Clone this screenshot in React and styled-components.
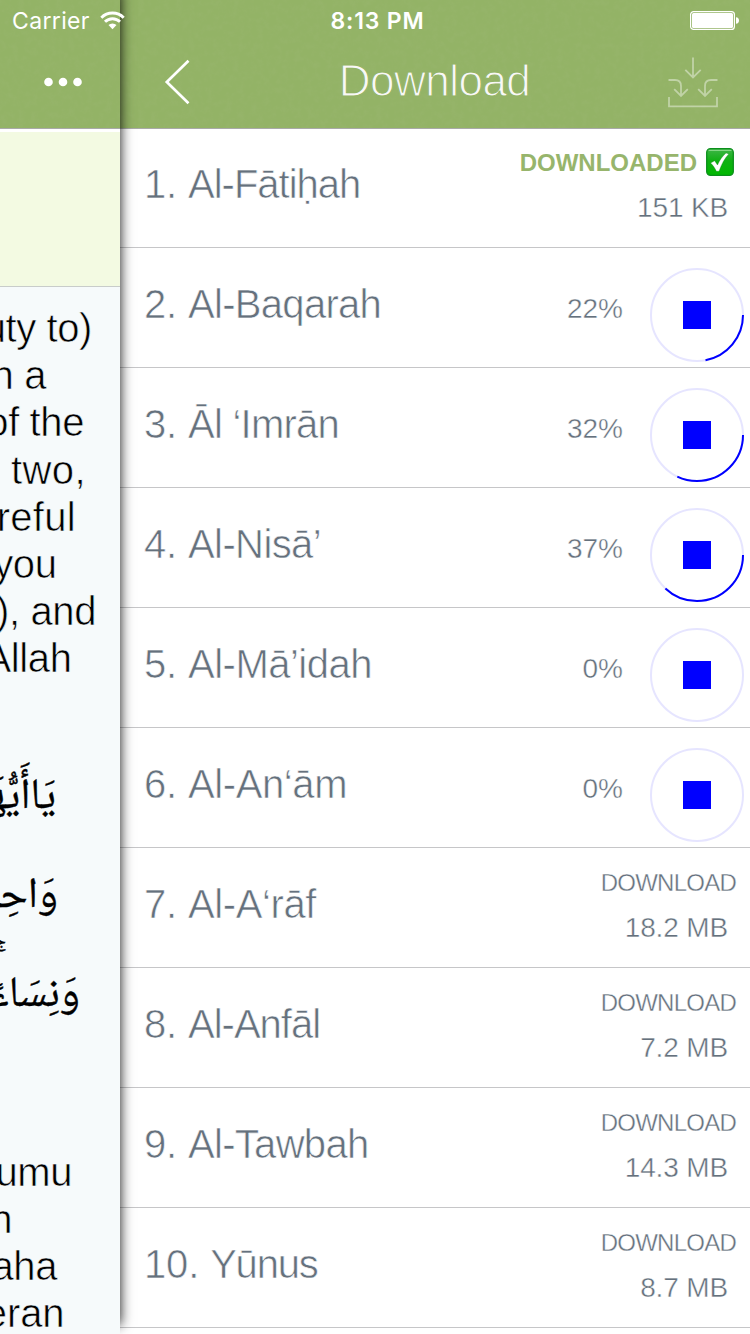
import React from 'react';
import styled, { createGlobalStyle } from 'styled-components';

const SANS = '"Liberation Sans", Arial, sans-serif';
const SLATE = '#65717d';

const GlobalStyle = createGlobalStyle`
  *, *::before, *::after { box-sizing: border-box; }
  body { margin: 0; background: #fff; font-family: ${SANS}; }
`;

const Screen = styled.div`
  position: relative;
  display: flex;
  width: 750px;
  height: 1334px;
  overflow: hidden;
  background: #fff;
`;

/* Status bar floats over both panes */
const StatusBar = styled.div`
  position: absolute;
  inset: 0 0 auto 0;
  z-index: 3;
  display: grid;
  grid-template-columns: 1fr auto 1fr;
  align-items: center;
  height: 41px;
  padding: 0 11px 0 12px;
  color: #fff;
  font-family: Inter, sans-serif;
  font-size: 23px;
`;
const Carrier = styled.div`
  display: flex;
  align-items: center;
  gap: 10px;
  letter-spacing: 0.35px;
`;
const Clock = styled.div`
  padding-left: 4px;
  font-weight: 600;
  letter-spacing: 0.8px;
`;
const Battery = styled.svg`
  justify-self: end;
`;

const ReaderPane = styled.aside`
  position: relative;
  z-index: 2;
  flex: 0 0 120px;
  min-width: 0;
  display: flex;
  flex-direction: column;
  height: 1334px;
  background: #f6fafb;
  box-shadow: 0 -9px 12px 0 rgba(0, 0, 0, 0.95);
`;
const DownloadPane = styled.main`
  flex: 1;
  display: flex;
  flex-direction: column;
`;

const HeaderBar = styled.header`
  position: relative;
  flex: 0 0 129px;
  display: grid;
  grid-template-columns: ${(p) => p.$columns};
  align-items: center;
  padding: 41px 32px 5px 44px;
  background: #93b366;
  border-bottom: 1px solid #a9aaa8;
  overflow: hidden;
`;
const Texture = styled.svg`
  position: absolute;
  inset: 0;
  width: 100%;
  height: 100%;
  opacity: 0.2;
`;
const HeaderIcon = styled.svg`
  position: relative;
  display: block;
`;
const Title = styled.h1`
  position: relative;
  margin: 0 13px 3px 0;
  text-align: center;
  font-size: 44px;
  font-weight: 400;
  line-height: 50px;
  letter-spacing: -0.5px;
  color: #f8f8f6;
  -webkit-text-stroke: 1.1px #93b366;
`;

const VerseBanner = styled.div`
  flex: 0 0 158px;
  border-top: 3px solid #fff;
  border-bottom: 1px solid #c8ccca;
  background: #f3fae2;
`;
const Paragraph = styled.div`
  display: flex;
  flex-direction: column;
  align-items: flex-end;
  padding-top: ${(p) => p.$top}px;
  font-size: 40px;
  line-height: 47.2px;
  letter-spacing: -0.4px;
  color: #000;
  -webkit-text-stroke: 0.6px #f6fafb;
`;
const Line = styled.span`
  flex: none;
  margin-right: ${(p) => p.$inset}px;
  letter-spacing: ${(p) => p.$tracking}px;
  white-space: pre;
`;
const ArabicBlock = styled.div`
  display: flex;
  flex-direction: column;
  align-items: flex-start;
  direction: rtl;
  padding-top: 66px;
  font-family: "Noto Naskh Arabic", Amiri, "Scheherazade New", "Noto Sans Arabic", serif;
  font-size: 43px;
  line-height: 99px;
  color: #000;
  -webkit-text-stroke: 0.4px #000;
`;
const ArabicLine = styled.span`
  height: 99px;
  margin-right: ${(p) => p.$inset}px;
  white-space: nowrap;
`;
/* Pause sign raised above the end of the word */
const PauseMark = styled.span`
  position: relative;
  left: 16px;
  top: -36px;
`;

const List = styled.ul`
  margin: -1px 0 0;
  padding: 0;
  list-style: none;
`;
const Row = styled.li`
  display: flex;
  height: 120px;
  padding-left: 24px;
  border-bottom: 1px solid #c6c6c8;
  color: ${SLATE};
`;
const Name = styled.div`
  flex: 1;
  padding-bottom: 7px;
  font-size: 40px;
  line-height: 113px;
  letter-spacing: -0.15px;
  white-space: pre;
  -webkit-text-stroke: 0.6px #fff;
`;
const Label = styled.span`
  letter-spacing: ${(p) => p.$tracking}px;
`;
const Status = styled.div`
  display: flex;
  flex-direction: column;
  align-items: flex-end;
  gap: 13px;
  padding: 20px 14px 0 0;
`;
const Action = styled.div`
  display: flex;
  align-items: center;
  gap: 9px;
  height: 30px;
  font-size: 24px;
  line-height: 30px;
  letter-spacing: -0.75px;
  -webkit-text-stroke: 0.35px #fff;
`;
const Done = styled(Action)`
  padding-right: 2px;
  font-weight: 700;
  letter-spacing: 0;
  color: #97b56c;
  -webkit-text-stroke: 0;
`;
const Size = styled.div`
  padding-right: 8px;
  font-size: 28px;
  line-height: 34px;
  letter-spacing: -0.15px;
  -webkit-text-stroke: 0.4px #fff;
`;
const Progress = styled.div`
  display: flex;
  align-items: center;
  gap: 27px;
  padding-right: 6px;
`;
const Percent = styled.span`
  padding-top: 2px;
  font-size: 28px;
  -webkit-text-stroke: 0.4px #fff;
`;
const Ring = styled.svg`
  margin-top: 15px;
`;
const Badge = styled.svg`
  margin-bottom: 2px;
`;

const SURAHS = [
  { no: 1, name: 'Al-Fātiḥah', tracking: -1, size: '151 KB', done: true },
  { no: 2, name: 'Al-Baqarah', tracking: -0.7, progress: 22 },
  { no: 3, name: 'Āl ‘Imrān', tracking: -0.75, progress: 32 },
  { no: 4, name: 'Al-Nisā’', tracking: -0.6, progress: 37 },
  { no: 5, name: 'Al-Mā’idah', tracking: -0.5, progress: 0 },
  { no: 6, name: 'Al-An‘ām', tracking: -0.4, progress: 0 },
  { no: 7, name: 'Al-A‘rāf', tracking: -0.4, size: '18.2 MB' },
  { no: 8, name: 'Al-Anfāl', tracking: -1, size: '7.2 MB' },
  { no: 9, name: 'Al-Tawbah', tracking: -0.7, size: '14.3 MB' },
  { no: 10, name: 'Yūnus', tracking: -1.2, size: '8.7 MB' },
];

const ENGLISH = [
  { text: 'uty to)', inset: 28 },
  { text: 'n a', inset: 74 },
  { text: 'of the', inset: 36 },
  { text: ' two,', inset: 34, tracking: 0.4 },
  { text: 'areful', inset: 44, tracking: 0.3 },
  { text: 'you', inset: 63.5 },
  { text: '), and', inset: 24 },
  { text: 'Allah', inset: 48.5 },
];
const SECOND = [
  { text: 'umu', inset: 48 },
  { text: 'n', inset: 108 },
  { text: 'aha', inset: 63 },
  { text: 'eran', inset: 55.5, tracking: -0.1 },
];
const ARABIC = [
  { text: 'يَاأَيُّهَا', inset: 64 },
  { text: 'وَاحِدَةٍ', inset: 62 },
  { text: 'وَنِسَاءً', inset: 40, mark: ' ۚ' },
];

function Header({ columns, children }) {
  const id = React.useId();
  return (
    <HeaderBar $columns={columns}>
      <Texture aria-hidden="true">
        <filter id={id} x="0" y="0" width="100%" height="100%">
          <feTurbulence type="fractalNoise" baseFrequency="0.16" numOctaves="3" seed="4" />
          <feColorMatrix values="0 0 0 0 0.38  0 0 0 0 0.5  0 0 0 0 0.22  1.6 0 0 0 -0.6" />
        </filter>
        <rect width="100%" height="100%" filter={`url(#${id})`} />
      </Texture>
      {children}
    </HeaderBar>
  );
}

function Lines({ top, lines }) {
  return (
    <Paragraph $top={top}>
      {lines.map(({ text, inset, tracking = -0.4 }) => (
        <Line key={text} $inset={inset} $tracking={tracking}>{text}</Line>
      ))}
    </Paragraph>
  );
}

function ProgressRing({ value }) {
  const c = 2 * Math.PI * 46;
  return (
    <Ring width="94" height="94" viewBox="0 0 94 94" fill="none" strokeWidth="2">
      <circle cx="47" cy="47" r="46" stroke="#e6e5ff" />
      {value > 0 && (
        <circle cx="47" cy="47" r="46" stroke="#0000ff" strokeDasharray={`${(c * value) / 100} ${c}`} />
      )}
      <rect x="33" y="33" width="28" height="28" fill="#0000ff" />
    </Ring>
  );
}

function CheckBadge() {
  return (
    <Badge width="28" height="28" viewBox="0 0 28 28">
      <defs>
        <linearGradient id="badge" x1="0" y1="0" x2="0" y2="1">
          <stop offset="0" stopColor="#3fb548" />
          <stop offset="0.45" stopColor="#10b013" />
          <stop offset="1" stopColor="#00b800" />
        </linearGradient>
      </defs>
      <rect x="0.7" y="0.7" width="26.6" height="26.6" rx="3.8" fill="url(#badge)" stroke="#0c8f1c" strokeWidth="1.3" />
      <path d="M3 2.4h22" stroke="#8ddc8c" strokeWidth="1" strokeLinecap="round" />
      <path d="M4.600 15l4-2.200 2.900 4.200C13.700 12 16.600 8 20 5l2.800.9C18.600 10.400 15.600 15.800 13 23.300h-2.600C9 20.300 7 17.200 4.600 15z" fill="#fff" stroke="#077d12" strokeWidth="0.3" />
    </Badge>
  );
}

function SurahRow({ no, name, tracking, size, done, progress }) {
  return (
    <Row>
      <Name>{`${no}. `}<Label $tracking={tracking}>{name}</Label></Name>
      {progress !== undefined ? (
        <Progress>
          <Percent>{progress}%</Percent>
          <ProgressRing value={progress} />
        </Progress>
      ) : (
        <Status>
          {done ? <Done>DOWNLOADED <CheckBadge /></Done> : <Action>DOWNLOAD</Action>}
          <Size>{size}</Size>
        </Status>
      )}
    </Row>
  );
}

export default function App() {
  return (
    <>
      <GlobalStyle />
      <Screen>
        <StatusBar>
          <Carrier>
            Carrier
            <svg width="25" height="19" viewBox="0 0 25 19" fill="none" stroke="#fff" strokeWidth="2.9">
              <path d="M1.3 6.7a15.8 15.8 0 0 1 22.4 0" />
              <path d="M5 10.8a10.6 10.6 0 0 1 15 0" />
              <path d="M12.5 18.3l-4-4.2a5.7 5.7 0 0 1 8 0z" fill="#fff" stroke="none" />
            </svg>
          </Carrier>
          <Clock>8:13 PM</Clock>
          <Battery width="49" height="19" viewBox="0 0 49 19">
            <rect x="0.6" y="0.6" width="43.8" height="17.8" rx="3" fill="none" stroke="#fff" strokeWidth="1.2" />
            <rect x="2" y="2" width="41" height="15" rx="1.5" fill="#fff" />
            <path d="M46 6.2q3 .4 3 3.3t-3 3.3z" fill="#fff" />
          </Battery>
        </StatusBar>

        <ReaderPane>
          <Header columns="auto">
            <HeaderIcon width="38" height="10" viewBox="0 0 38 10" fill="#fff">
              <circle cx="4.5" cy="5" r="4.3" />
              <circle cx="19" cy="5" r="4.3" />
              <circle cx="33.5" cy="5" r="4.3" />
            </HeaderIcon>
          </Header>
          <VerseBanner />
          <Lines top={18} lines={ENGLISH} />
          <ArabicBlock>
            {ARABIC.map(({ text, inset, mark }) => (
              <ArabicLine key={text} $inset={inset}>
                {text}
                {mark && <PauseMark>{mark}</PauseMark>}
              </ArabicLine>
            ))}
          </ArabicBlock>
          <Lines top={103} lines={SECOND} />
        </ReaderPane>

        <DownloadPane>
          <Header columns="50px 1fr 50px">
            <HeaderIcon width="26" height="46" viewBox="0 0 26 46" fill="none" stroke="#fff" strokeWidth="2.7">
              <path d="M24.5 1.8L2.8 23l21.7 21.2" />
            </HeaderIcon>
            <Title>Download</Title>
            <HeaderIcon width="50" height="52" viewBox="0 0 50 52" fill="none" stroke="#fff" strokeOpacity="0.42" strokeWidth="1.8">
              <path d="M25 1.500v20M17.300 13.800l7.700 7.700 7.700-7.700" />
              <path d="M.5 24H7q6 0 6 6v10M6.200 33.200l6.800 6.800 6.800-6.800" />
              <path d="M49.500 24H43q-6 0-6 6v10M30.200 33.200l6.800 6.800 6.800-6.800" />
              <path d="M1 41v9.300h48v-9.300" />
            </HeaderIcon>
          </Header>
          <List>
            {SURAHS.map((s) => <SurahRow key={s.no} {...s} />)}
          </List>
        </DownloadPane>
      </Screen>
    </>
  );
}
